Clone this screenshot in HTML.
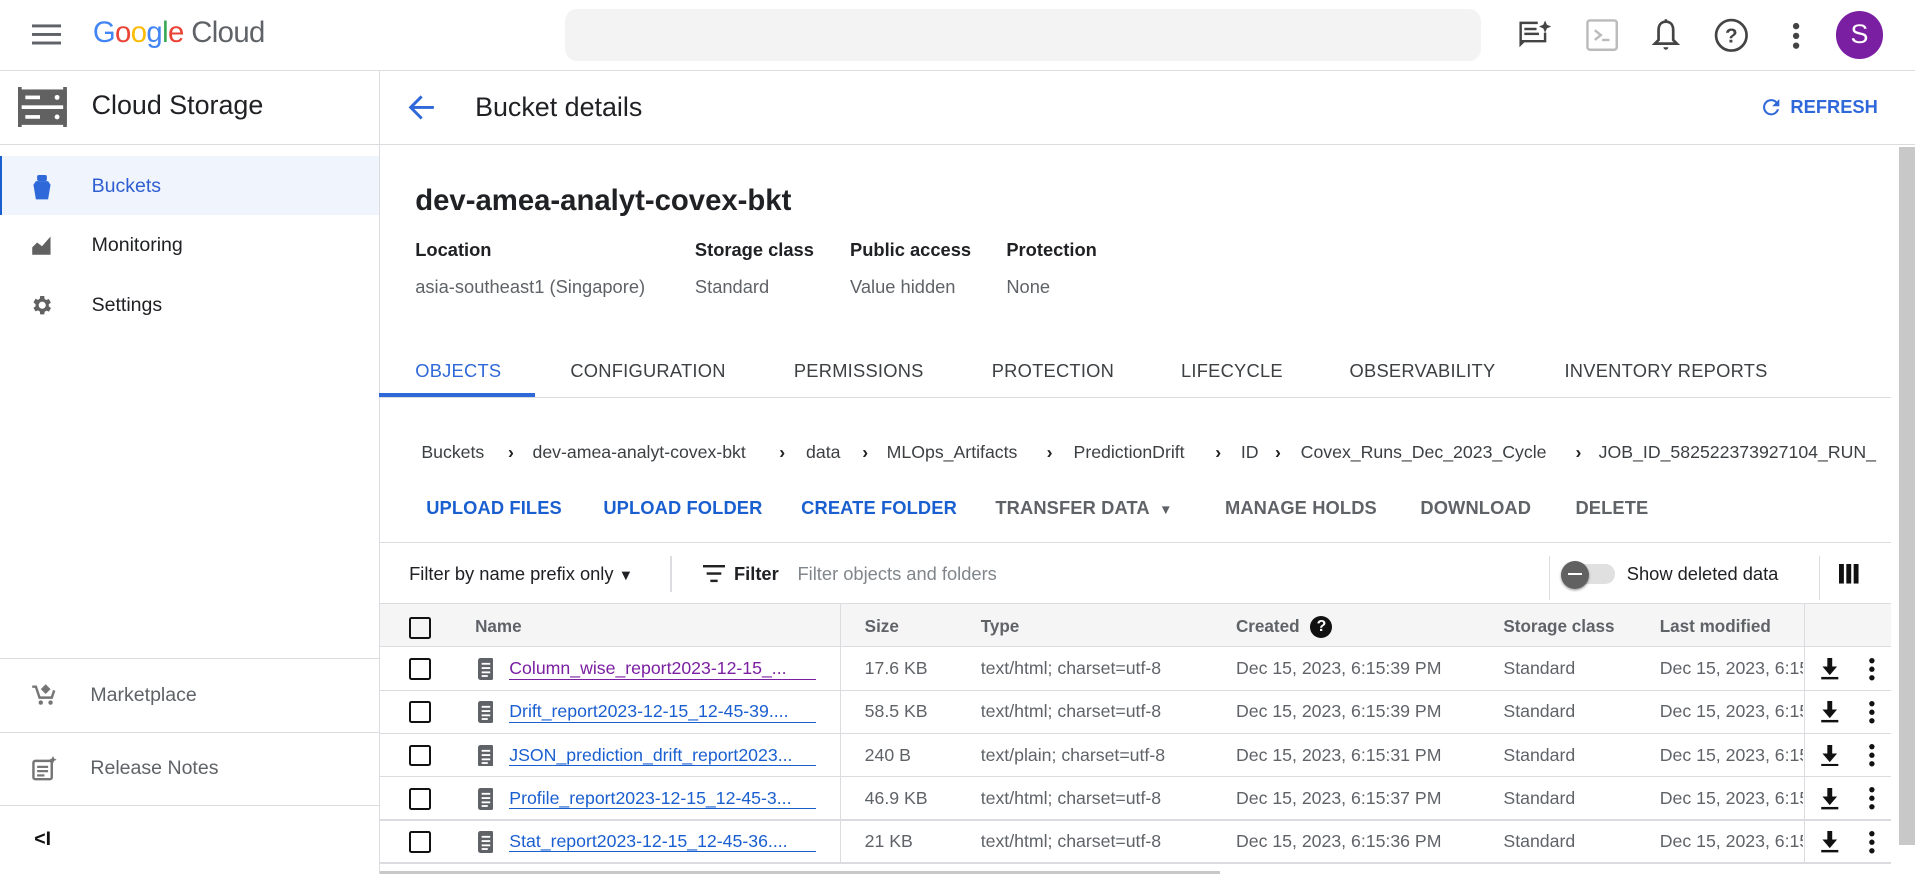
<!DOCTYPE html>
<html><head><meta charset="utf-8"><style>
*{box-sizing:border-box;margin:0;padding:0}
html,body{width:1915px;height:874px;overflow:hidden;background:#fff;font-family:"Liberation Sans",Arial,sans-serif;color:#202124}
#w{zoom:1.2213;width:1568px;height:716px;position:relative}
.a{position:absolute;white-space:nowrap}
.hl{position:absolute;height:1px;background:#dadce0}
.vl{position:absolute;width:1px;background:#dadce0}
.tab{position:absolute;top:295px;font-size:15px;color:#3c4043;font-weight:500;letter-spacing:.2px}
.btn{position:absolute;top:407px;font-size:15px;font-weight:600;color:#3c4043;letter-spacing:.1px;white-space:nowrap}
.btn.b{color:#1a5fd0}
.bc{position:absolute;top:362px;font-size:14.5px;color:#3c4043;white-space:nowrap}
.th{position:absolute;top:505px;font-size:14px;color:#5f6368;font-weight:600;white-space:nowrap}
.cb{position:absolute;width:18px;height:18px;border:2px solid #111;border-radius:2px}
.td{position:absolute;font-size:14.5px;color:#5f6368;white-space:nowrap}
.lk{position:absolute;font-size:14.5px;color:#1a5fd0;border-bottom:1px solid #1a5fd0;line-height:17px;white-space:nowrap}
</style></head><body><div id="w">
<svg class="a" style="left:26px;top:18px" width="24" height="20"><rect y="2" width="24" height="2.4" fill="#5f6368"/><rect y="9" width="24" height="2.4" fill="#5f6368"/><rect y="16" width="24" height="2.4" fill="#5f6368"/></svg>
<div class="a" style="left:76px;top:13px;font-size:24px;letter-spacing:-.5px"><span style="color:#4285f4">G</span><span style="color:#ea4335">o</span><span style="color:#fbbc05">o</span><span style="color:#4285f4">g</span><span style="color:#34a853">l</span><span style="color:#ea4335">e</span> <span style="color:#5f6368">Cloud</span></div>
<div class="a" style="left:463px;top:7px;width:750px;height:43px;background:#f3f3f3;border-radius:10px"></div>
<svg class="a" style="left:1242px;top:15px" width="30" height="30" viewBox="0 0 30 30"><path d="M2 3h15v2H4v13h18v-6h2v8H6l-4 4z" fill="#444"/><rect x="6" y="8" width="10" height="2" fill="#444"/><rect x="6" y="12" width="12" height="2" fill="#444"/><path d="M23 2l1.5 3.5L28 7l-3.5 1.5L23 12l-1.5-3.5L18 7l3.5-1.5z" fill="#444"/></svg>
<svg class="a" style="left:1298px;top:15px" width="28" height="28"><rect x="2" y="2" width="24" height="24" rx="2" fill="none" stroke="#bbb" stroke-width="2"/><path d="M8 10l5 4-5 4" fill="none" stroke="#bbb" stroke-width="2"/><rect x="14" y="17" width="6" height="2" fill="#bbb"/></svg>
<svg class="a" style="left:1351px;top:15px" width="26" height="30"><path d="M13 3c-4 0-6 3-6 7v8l-3 3h18l-3-3v-8c0-4-2-7-6-7z" fill="none" stroke="#444" stroke-width="2.2"/><rect x="12" y="1" width="2" height="3" fill="#444"/><path d="M11 24h4a2 2 0 0 1-4 0z" fill="#444"/></svg>
<svg class="a" style="left:1403px;top:14px" width="30" height="30"><circle cx="15" cy="15" r="12.5" fill="none" stroke="#444" stroke-width="2.2"/><text x="15" y="21" text-anchor="middle" font-size="17" font-weight="bold" fill="#444" font-family="Liberation Sans">?</text></svg>
<svg class="a" style="left:1466px;top:16px" width="10" height="26"><circle cx="5" cy="5" r="2.6" fill="#444"/><circle cx="5" cy="13" r="2.6" fill="#444"/><circle cx="5" cy="21" r="2.6" fill="#444"/></svg>
<div class="a" style="left:1503px;top:9px;width:39px;height:39px;border-radius:50%;background:#7b1fa2;color:#fff;font-size:22px;text-align:center;line-height:39px">S</div>
<div class="hl" style="left:0;top:57px;width:1568px"></div>
<div class="vl" style="left:310px;top:58px;height:658px"></div>
<svg class="a" style="left:15px;top:71px" width="40" height="33"><rect width="3" height="33" fill="#616161"/><rect x="37" width="3" height="33" fill="#616161"/><rect x="0" y="2" width="40" height="13" fill="#616161"/><rect x="0" y="18" width="40" height="13" fill="#616161"/><rect x="6" y="7" width="12" height="3" fill="#fff"/><rect x="6" y="23" width="12" height="3" fill="#fff"/><circle cx="32" cy="8.5" r="2" fill="#fff"/><circle cx="32" cy="24.5" r="2" fill="#fff"/></svg>
<div class="a" style="left:75px;top:74px;font-size:22px;color:#202124">Cloud Storage</div>
<div class="hl" style="left:0;top:118px;width:310px"></div>
<div class="a" style="left:0;top:128px;width:310px;height:48px;background:#eff4fd;border-left:2px solid #1a5fd0"></div>
<svg class="a" style="left:25px;top:143px" width="18" height="22"><path d="M4 5h10l2 3-2 12H4L2 8z" fill="#2f68d8"/><rect x="5" y="0" width="8" height="5" rx="1.5" fill="#2f68d8"/></svg>
<div class="a" style="left:75px;top:143px;font-size:16px;color:#2f5fd0">Buckets</div>
<svg class="a" style="left:25px;top:192px" width="18" height="18"><path d="M1 17V11l4-4 4 3 7-8v15z" fill="#616161"/></svg>
<div class="a" style="left:75px;top:192px;font-size:16px">Monitoring</div>
<svg class="a" style="left:24px;top:240px" width="20" height="20" viewBox="0 0 24 24"><path fill="#616161" d="M19.4 13a7.5 7.5 0 0 0 0-2l2.1-1.6-2-3.5-2.5 1a7 7 0 0 0-1.7-1L15 3h-4l-.4 2.7a7 7 0 0 0-1.7 1l-2.5-1-2 3.5L6.5 11a7.5 7.5 0 0 0 0 2l-2.1 1.6 2 3.5 2.5-1a7 7 0 0 0 1.7 1L11 21h4l.4-2.7a7 7 0 0 0 1.7-1l2.5 1 2-3.5zM13 15.5a3.5 3.5 0 1 1 0-7 3.5 3.5 0 0 1 0 7z"/></svg>
<div class="a" style="left:75px;top:241px;font-size:16px">Settings</div>
<div class="hl" style="left:0;top:539px;width:310px"></div>
<svg class="a" style="left:25px;top:559px" width="22" height="20"><path d="M1 3h3l3 9h10l2-6" fill="none" stroke="#757575" stroke-width="2"/><path d="M12 1l4 4-4 4-4-4z" fill="#757575"/><circle cx="8" cy="16" r="1.8" fill="#757575"/><circle cx="16" cy="16" r="1.8" fill="#757575"/></svg>
<div class="a" style="left:74px;top:560px;font-size:16px;color:#5f6368">Marketplace</div>
<div class="hl" style="left:0;top:599px;width:310px"></div>
<svg class="a" style="left:25px;top:619px" width="22" height="22"><rect x="2" y="4" width="15" height="15" rx="1.5" fill="none" stroke="#757575" stroke-width="2"/><rect x="5" y="8" width="9" height="1.8" fill="#757575"/><rect x="5" y="11.5" width="9" height="1.8" fill="#757575"/><rect x="5" y="15" width="6" height="1.8" fill="#757575"/><path d="M18 0l1 2 2 1-2 1-1 2-1-2-2-1 2-1z" fill="#757575"/></svg>
<div class="a" style="left:74px;top:620px;font-size:16px;color:#5f6368">Release Notes</div>
<div class="hl" style="left:0;top:659px;width:310px"></div>
<div class="a" style="left:28px;top:678px;font-size:16px;font-weight:bold;color:#111">&lt;I</div>
<svg class="a" style="left:333px;top:77px" width="24" height="22"><path d="M22 11H4M12 2l-9 9 9 9" fill="none" stroke="#2f68d8" stroke-width="2.4"/></svg>
<div class="a" style="left:389px;top:75px;font-size:22px">Bucket details</div>
<svg class="a" style="left:1440px;top:78px" width="20" height="20" viewBox="0 0 24 24"><path fill="#2f68d8" d="M17.65 6.35A8 8 0 1 0 19.73 14h-2.08A6 6 0 1 1 12 6c1.66 0 3.14.69 4.22 1.78L13 11h7V4z"/></svg>
<div class="a" style="left:1466px;top:79px;font-size:15px;font-weight:600;color:#2f68d8">REFRESH</div>
<div class="hl" style="left:311px;top:118px;width:1257px"></div>
<div class="a" style="left:1555px;top:120px;width:13px;height:572px;background:#c8c8c8"></div>
<div class="a" style="left:340px;top:151px;font-size:24px;font-weight:600;color:#202124">dev-amea-analyt-covex-bkt</div>
<div class="a" style="left:340px;top:196px;font-size:15px;font-weight:600">Location</div>
<div class="a" style="left:569px;top:196px;font-size:15px;font-weight:600">Storage class</div>
<div class="a" style="left:696px;top:196px;font-size:15px;font-weight:600">Public access</div>
<div class="a" style="left:824px;top:196px;font-size:15px;font-weight:600">Protection</div>
<div class="a" style="left:340px;top:226px;font-size:15px;color:#5f6368">asia-southeast1 (Singapore)</div>
<div class="a" style="left:569px;top:226px;font-size:15px;color:#5f6368">Standard</div>
<div class="a" style="left:696px;top:226px;font-size:15px;color:#5f6368">Value hidden</div>
<div class="a" style="left:824px;top:226px;font-size:15px;color:#5f6368">None</div>
<div class="tab" style="left:340px;color:#2f68d8">OBJECTS</div>
<div class="tab" style="left:467px">CONFIGURATION</div>
<div class="tab" style="left:650px">PERMISSIONS</div>
<div class="tab" style="left:812px">PROTECTION</div>
<div class="tab" style="left:967px">LIFECYCLE</div>
<div class="tab" style="left:1105px">OBSERVABILITY</div>
<div class="tab" style="left:1281px">INVENTORY REPORTS</div>
<div class="hl" style="left:311px;top:325px;width:1237px"></div>
<div class="a" style="left:310px;top:322px;width:128px;height:3px;background:#2f68d8"></div>
<div class="bc" style="left:345px">Buckets</div>
<div class="bc" style="left:436px">dev-amea-analyt-covex-bkt</div>
<div class="bc" style="left:660px">data</div>
<div class="bc" style="left:726px">MLOps_Artifacts</div>
<div class="bc" style="left:879px">PredictionDrift</div>
<div class="bc" style="left:1016px">ID</div>
<div class="bc" style="left:1065px">Covex_Runs_Dec_2023_Cycle</div>
<div class="bc" style="left:1309px;width:239px;overflow:hidden">JOB_ID_582522373927104_RUN_</div>
<div class="bc" style="left:416px;font-weight:bold;color:#222">›</div>
<div class="bc" style="left:638px;font-weight:bold;color:#222">›</div>
<div class="bc" style="left:706px;font-weight:bold;color:#222">›</div>
<div class="bc" style="left:857px;font-weight:bold;color:#222">›</div>
<div class="bc" style="left:995px;font-weight:bold;color:#222">›</div>
<div class="bc" style="left:1044px;font-weight:bold;color:#222">›</div>
<div class="bc" style="left:1290px;font-weight:bold;color:#222">›</div>
<div class="btn b" style="left:349px">UPLOAD FILES</div>
<div class="btn b" style="left:494px">UPLOAD FOLDER</div>
<div class="btn b" style="left:656px">CREATE FOLDER</div>
<div class="btn" style="left:815px;color:#5f6368">TRANSFER DATA <span style="font-size:11px;margin-left:4px">▼</span></div>
<div class="btn" style="left:1003px;color:#5f6368">MANAGE HOLDS</div>
<div class="btn" style="left:1163px;color:#5f6368">DOWNLOAD</div>
<div class="btn" style="left:1290px;color:#5f6368">DELETE</div>
<div class="hl" style="left:311px;top:444px;width:1237px"></div>
<div class="a" style="left:335px;top:461px;font-size:15px">Filter by name prefix only <span style="font-size:12px">▼</span></div>
<div class="vl" style="left:549px;top:455px;height:30px"></div>
<svg class="a" style="left:576px;top:463px" width="18" height="14"><rect width="18" height="2" fill="#222"/><rect x="3" y="6" width="12" height="2" fill="#222"/><rect x="6" y="12" width="6" height="2" fill="#222"/></svg>
<div class="a" style="left:601px;top:461px;font-size:15px;font-weight:600">Filter</div>
<div class="a" style="left:653px;top:461px;font-size:15px;color:#80868b">Filter objects and folders</div>
<div class="vl" style="left:1268px;top:455px;height:36px"></div>
<div class="a" style="left:1284px;top:462px;width:38px;height:16px;border-radius:8px;background:#e0e0e0"></div>
<div class="a" style="left:1278px;top:459px;width:23px;height:23px;border-radius:50%;background:#616161;box-shadow:0 1px 2px rgba(0,0,0,.4)"><div style="position:absolute;left:6px;top:10px;width:11px;height:2px;background:#fff"></div></div>
<div class="a" style="left:1332px;top:461px;font-size:15px">Show deleted data</div>
<div class="vl" style="left:1489px;top:455px;height:36px"></div>
<svg class="a" style="left:1506px;top:462px" width="16" height="16"><rect width="4" height="16" fill="#111"/><rect x="6" width="4" height="16" fill="#111"/><rect x="12" width="4" height="16" fill="#111"/></svg>
<div class="a" style="left:311px;top:494px;width:1237px;height:36px;background:#f5f5f5;border-top:1px solid #dadce0;border-bottom:1px solid #dadce0"></div>
<div class="vl" style="left:688px;top:494px;height:212px"></div>
<div class="vl" style="left:1477px;top:494px;height:212px"></div>
<div class="cb" style="left:335px;top:505px"></div>
<div class="th" style="left:389px">Name</div>
<div class="th" style="left:708px">Size</div>
<div class="th" style="left:803px">Type</div>
<div class="th" style="left:1012px">Created</div>
<div class="a" style="left:1073px;top:504px;width:18px;height:18px;border-radius:50%;background:#111;color:#fff;font-size:13px;font-weight:bold;text-align:center;line-height:18px">?</div>
<div class="th" style="left:1231px">Storage class</div>
<div class="th" style="left:1359px">Last modified</div>
<div id="rows"></div>
<div class="a" style="left:311px;top:713px;width:688px;height:3px;background:#c8c8c8"></div>
</div>
<script>
var d=[["Column_wise_report2023-12-15_...","17.6 KB","text/html; charset=utf-8","6:15:39",1],["Drift_report2023-12-15_12-45-39....","58.5 KB","text/html; charset=utf-8","6:15:39"],["JSON_prediction_drift_report2023...","240 B","text/plain; charset=utf-8","6:15:31"],["Profile_report2023-12-15_12-45-3...","46.9 KB","text/html; charset=utf-8","6:15:37"],["Stat_report2023-12-15_12-45-36....","21 KB","text/html; charset=utf-8","6:15:36"]];
var h="";d.forEach(function(r,i){var t=530+i*35.3,c=t+9;var col=r[4]?"#7b1fa2":"#1a5fd0";
h+='<div class="hl" style="left:311px;top:'+(t+35)+'px;width:1237px"></div>';
h+='<div class="cb" style="left:335px;top:'+(t+9)+'px"></div>';
h+='<svg class="a" style="left:391px;top:'+(t+9)+'px" width="13" height="18"><rect width="13" height="18" rx="2" fill="#5f6368"/><rect x="3" y="4" width="7" height="1.5" fill="#fff"/><rect x="3" y="7.5" width="7" height="1.5" fill="#fff"/><rect x="3" y="11" width="7" height="1.5" fill="#fff"/><rect x="3" y="14" width="5" height="1.5" fill="#fff"/></svg>';
h+='<div class="lk" style="left:417px;top:'+c+'px;width:251px;color:'+col+';border-color:'+col+'">'+r[0]+'</div>';
h+='<div class="td" style="left:708px;top:'+c+'px">'+r[1]+'</div>';
h+='<div class="td" style="left:803px;top:'+c+'px">'+r[2]+'</div>';
h+='<div class="td" style="left:1012px;top:'+c+'px">Dec 15, 2023, '+r[3]+' PM</div>';
h+='<div class="td" style="left:1231px;top:'+c+'px">Standard</div>';
h+='<div class="td" style="left:1359px;top:'+c+'px;width:117px;overflow:hidden">Dec 15, 2023, 6:15:39 PM</div>';
h+='<svg class="a" style="left:1490px;top:'+(t+9)+'px" width="16" height="18"><path d="M6 0h4v7h4l-6 7-6-7h4z" fill="#111"/><rect x="1" y="15.5" width="14" height="2" fill="#111"/></svg>';
h+='<svg class="a" style="left:1529px;top:'+(t+8)+'px" width="8" height="20"><circle cx="4" cy="3" r="2.2" fill="#111"/><circle cx="4" cy="10" r="2.2" fill="#111"/><circle cx="4" cy="17" r="2.2" fill="#111"/></svg>';});
document.getElementById("rows").outerHTML=h;
</script>
</body></html>
